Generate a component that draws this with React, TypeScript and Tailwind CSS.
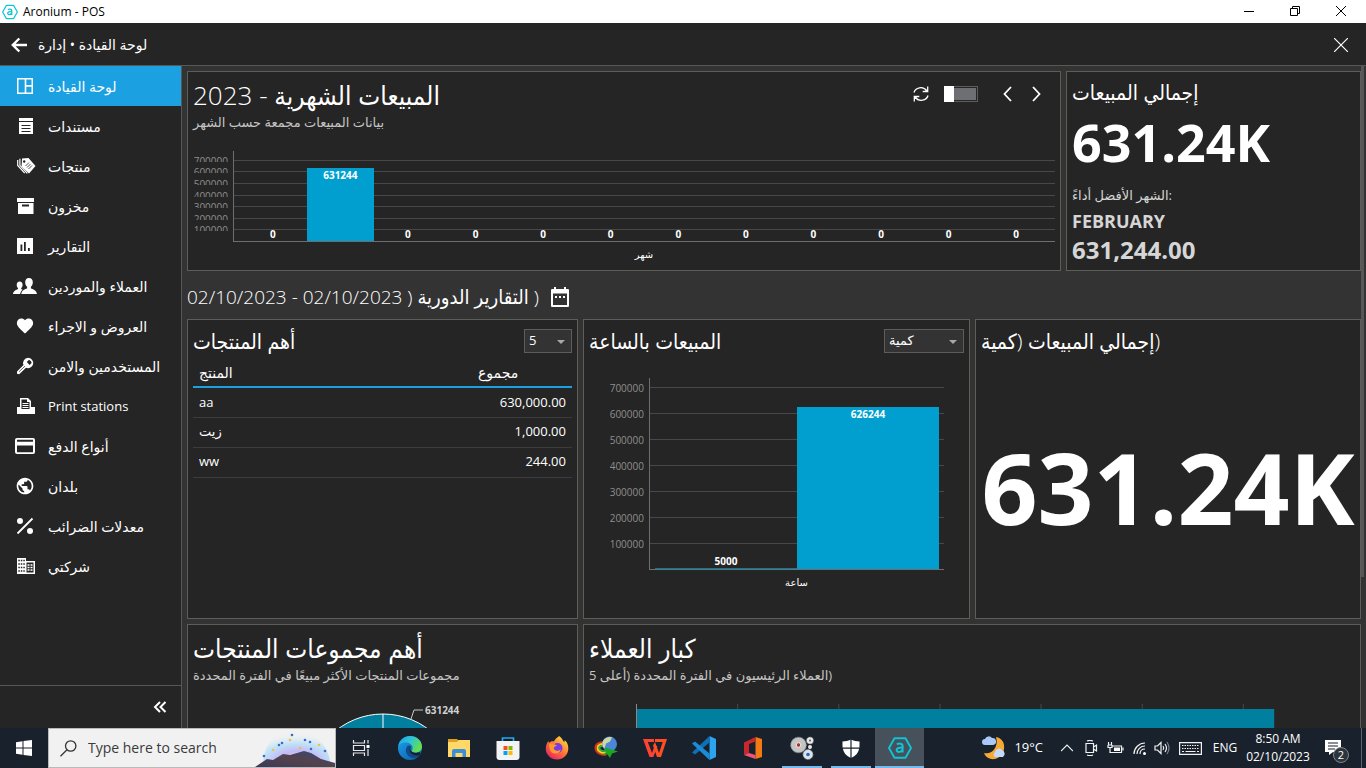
import React from "react";
import { IoMdHeart } from "react-icons/io";
import { MdPublic } from "react-icons/md";

type Kids = { children: React.ReactNode };

const Glyph = ({ children }: Kids) => (
  <svg width="24" height="24" viewBox="0 0 24 24" fill="currentColor" className="shrink-0" aria-hidden="true">
    {children}
  </svg>
);

const icons: Record<string, React.ReactNode> = {
  dashboard: (
    <Glyph>
      <path d="M4 4h16v16H4zM5.500 5.500v13h6.200v-13zm7.800 0v5.600h5.200V5.500zm0 7.200v5.800h5.200v-5.800z" fillRule="evenodd" />
    </Glyph>
  ),
  documents: (
    <Glyph>
      <path d="M6 4h14v3H6zM6 8h14v12H6z" />
      <path d="M8.500 11.500h9M8.500 14.500h9M8.500 17.500h9" stroke="#252525" strokeWidth="1" />
    </Glyph>
  ),
  products: (
    <Glyph>
      <path d="M9 4.500 15.500 4 22.500 12 16 19.500 8.500 12.500z" />
      <path d="M4.700 6v5.500l7 7.700M6.900 4.800v6.500l7.400 8" fill="none" stroke="currentColor" strokeWidth="1.200" />
      <circle cx="11.200" cy="7.500" r="1.200" fill="#252525" />
      <path d="m12.500 12 3.500-3.500M14 13.500 17.500 10M15.500 15l3.500-3.500" stroke="#252525" strokeWidth=".8" />
    </Glyph>
  ),
  stock: (
    <Glyph>
      <path d="M4 4h17v4H4zM5 9h15.500v11H5zM9 10.500v2h7v-2z" fillRule="evenodd" />
    </Glyph>
  ),
  reports: (
    <Glyph>
      <path d="M4 4h16v16H4zM7.500 10.500v6.500h1.800v-6.500zM11 8v9h1.800V8zM15 14v3h1.800v-3z" fillRule="evenodd" />
    </Glyph>
  ),
  people: (
    <Glyph>
      <path d="M16 4c2.600 0 3.800 1.800 3.800 4.300 0 2-.8 3.600-1.900 4.500v1.400c1.800 1.100 5.600 1.600 6.100 5.800H8.300c.4-4.200 4-4.700 5.800-5.800v-1.400c-1.100-.9-1.900-2.500-1.900-4.500C12.200 5.800 13.400 4 16 4z" />
      <path d="M6.700 7.500c2 0 2.900 1.400 2.900 3.300 0 1.500-.6 2.700-1.400 3.300v1c.5.300 1 .5 1.600.700-1.400 1-2.300 2.300-2.700 4.200H0c.3-3.200 3.600-4.100 5-4.900v-1c-.8-.6-1.300-1.800-1.300-3.300 0-1.900 1-3.300 3-3.300z" />
    </Glyph>
  ),
  heart: <IoMdHeart size={20} className="mx-[2px] shrink-0" aria-hidden="true" />,
  key: (
    <Glyph>
      <path d="M15 3.800a5.200 5.200 0 1 1-2 10L6.200 20.200 4 19.800v-2.300l6.500-6.400A5.300 5.300 0 0 1 15 3.800zm.8 2.300-2 1.800 2.800 3 2-1.900c-.2-1.500-1.300-2.700-2.800-2.900z" fillRule="evenodd" />
      <path d="m6 17.800 6-5.700" stroke="#252525" strokeWidth=".7" />
    </Glyph>
  ),
  print: (
    <Glyph>
      <path d="M4 13h3V4h8l3 3v6h4v7H4zM8.500 5.500V15h8V8H14V5.500z" fillRule="evenodd" />
      <path d="M9.500 9.500h6M9.500 11.500h6M9.500 13.500h6" stroke="currentColor" strokeWidth="1" />
    </Glyph>
  ),
  card: (
    <Glyph>
      <path d="M4 4h16a2 2 0 0 1 2 2v12a2 2 0 0 1-2 2H4a2 2 0 0 1-2-2V6a2 2 0 0 1 2-2zm0 1.800v2h16v-2zM4 11.500v6.700h16v-6.700z" fillRule="evenodd" />
    </Glyph>
  ),
  globe: <MdPublic size={20} className="mx-[2px] shrink-0" aria-hidden="true" />,
  percent: (
    <Glyph>
      <circle cx="7" cy="7" r="3" />
      <circle cx="17" cy="17" r="3" />
      <path d="M19.500 4.500 4.500 19.500" stroke="currentColor" strokeWidth="1.800" />
    </Glyph>
  ),
  company: (
    <Glyph>
      <path d="M4 4h9v3h9v13H4z" />
      <path d="M5.300 6.500h6.500M5.300 10h6.500M5.300 13.500h6.500M5.300 17h6.500" stroke="#252525" strokeWidth="1.500" strokeDasharray="1.500 1" />
      <path d="M13.500 8.500h7v10h-7z" fill="#252525" />
      <path d="M14.500 11h5M14.500 13.500h5M14.500 16h5" stroke="currentColor" strokeWidth="1.500" strokeDasharray="2 1" />
    </Glyph>
  ),
};

const nav = [
  { icon: "dashboard", label: "لوحة القيادة" },
  { icon: "documents", label: "مستندات" },
  { icon: "products", label: "منتجات" },
  { icon: "stock", label: "مخزون" },
  { icon: "reports", label: "التقارير" },
  { icon: "people", label: "العملاء والموردين" },
  { icon: "heart", label: "العروض و الاجراء" },
  { icon: "key", label: "المستخدمين والامن" },
  { icon: "print", label: "Print stations", latin: true },
  { icon: "card", label: "أنواع الدفع" },
  { icon: "globe", label: "بلدان" },
  { icon: "percent", label: "معدلات الضرائب" },
  { icon: "company", label: "شركتي" },
];

const AroniumLogo = ({ size }: { size: number }) => (
  <svg width={size} height={size} viewBox="0 0 24 24" fill="none" stroke="#0fc4d4" strokeLinejoin="round" aria-hidden="true">
    <path d="M6.500 2.200h11L23 12l-5.500 9.800h-11L1 12z" strokeWidth="1.900" />
    <path d="M8.800 8.300c1.600-1 5.800-1.300 5.800 1.600v6.600M14.600 11.600c-3.200-.2-6 .4-6 2.400 0 2.600 4.400 2.500 6-.2" strokeWidth="2" />
  </svg>
);

function TitleBar() {
  const btn = "flex h-full w-[46px] items-center justify-center";
  return (
    <div className="flex h-[23px] shrink-0 items-center bg-white text-black">
      <div className="flex items-center gap-[5px] pl-[2px] text-xs">
        <AroniumLogo size={16} />
        <span>Aronium - POS</span>
      </div>
      <div className="ml-auto flex h-full pr-[2px] pb-[2px]">
        <button className={btn} aria-label="Minimize">
          <svg width="10" height="10"><path d="M0 5.500h10" stroke="#000" /></svg>
        </button>
        <button className={btn} aria-label="Restore">
          <svg width="10" height="10" fill="none" stroke="#000"><path d="M.5 2.500h7v7h-7zM2.500 2.500v-2h7v7h-2" /></svg>
        </button>
        <button className={btn} aria-label="Close window">
          <svg width="10" height="10"><path d="M0 0l10 10M10 0 0 10" stroke="#000" /></svg>
        </button>
      </div>
    </div>
  );
}

function Header() {
  return (
    <header className="flex h-[43px] shrink-0 items-center border-b border-[#575757] bg-[#252525] pt-[2px] pr-[18px] pl-[11px]">
      <button aria-label="Back">
        <svg width="16" height="16" viewBox="0 0 16 16" fill="none" stroke="#fff" strokeWidth="2.400">
          <path d="M16 8H2M8.300 1.500 1.800 8l6.500 6.500" />
        </svg>
      </button>
      <h1 className="ml-[11px] text-sm">لوحة القيادة • إدارة</h1>
      <button className="ml-auto" aria-label="Close">
        <svg width="14" height="14"><path d="M0 0l14 14M14 0 0 14" stroke="#fff" strokeWidth="1.200" /></svg>
      </button>
    </header>
  );
}

function Sidebar() {
  return (
    <aside className="flex w-[182px] shrink-0 flex-col border-r border-[#575757] bg-[#252525]">
      <nav>
        {nav.map((item, i) => (
          <a
            key={item.label}
            href="#"
            className={"flex h-10 items-center gap-[11px] pl-[13px] whitespace-nowrap " + (i === 0 ? "bg-[#1ba1e2]" : "")}
          >
            {icons[item.icon]}
            <span className={"pt-px " + (item.latin ? "text-[13px]" : "text-sm")}>{item.label}</span>
          </a>
        ))}
      </nav>
      <div className="mt-auto flex h-[43px] items-center justify-end border-t border-[#575757] pr-[14px]">
        <button aria-label="Collapse">
          <svg width="14" height="12" fill="none" stroke="#fff" strokeWidth="2"><path d="M7 1 2 6l5 5M12.500 1l-5 5 5 5" /></svg>
        </button>
      </div>
    </aside>
  );
}

const Card = ({ children, className = "" }: Kids & { className?: string }) => (
  <section className={"min-w-0 overflow-hidden border border-[#5c5e57] bg-[#252525] px-[5px] " + className}>{children}</section>
);

const Title = ({ children }: Kids) => (
  <h2 className="font-['Open_Sans','DejaVu_Sans_Condensed','DejaVu_Sans',sans-serif] text-[21px] leading-[28px] font-light whitespace-nowrap">{children}</h2>
);
const BigTitle = ({ children }: Kids) => (
  <h2 className="font-['Open_Sans','DejaVu_Sans_Condensed','DejaVu_Sans',sans-serif] text-[26px] leading-[32px] font-light whitespace-nowrap">{children}</h2>
);
const Sub = ({ children }: Kids) => <p className="mt-px text-[13px] leading-[20px] whitespace-nowrap text-[#c4c4c4]">{children}</p>;

const ticks = [700000, 600000, 500000, 400000, 300000, 200000, 100000];

type ChartProps = {
  data: number[];
  step: number;
  top: number;
  caption: string;
  clipped?: boolean;
};

function BarChart({ data, step, top, caption, clipped }: ChartProps) {
  const height = Math.round(top + step * 7);
  const y = (v: number) => Math.round(height - (v / 100000) * step);
  return (
    <figure className="flex">
      <div className="relative w-10 shrink-0 text-[10px] text-[#8f8f8f]" style={{ height }}>
        {ticks.map((t) => (
          <div
            key={t}
            className={"absolute right-[5px] overflow-hidden leading-[12px] " + (clipped ? "h-[7px]" : "h-[12px]")}
            style={{ top: y(t) - 5 }}
          >
            {t}
          </div>
        ))}
      </div>
      <div className="min-w-0 flex-1">
        <div className="relative border-b border-l border-[#6e6e6e]" style={{ height: height + 1 }}>
          <svg className="absolute inset-0 h-full w-full" aria-hidden="true">
            {ticks.map((t) => (
              <line key={t} x1="0" x2="100%" y1={y(t) + 0.5} y2={y(t) + 0.5} stroke="#484848" />
            ))}
          </svg>
          <div className="relative flex h-full items-end px-[5px]">
            {data.map((v, i) => (
              <div key={i} className="flex flex-1 flex-col items-center justify-end text-[10px] leading-[14px] font-bold">
                {v < 20000 && <span>{v}</span>}
                <div
                  className={"w-full text-center " + (v < 20000 ? "bg-[#007f9f]" : "bg-[#009fcf]")}
                  style={{ height: Math.floor((v / 100000) * step) }}
                >
                  {v >= 20000 && v}
                </div>
              </div>
            ))}
          </div>
        </div>
        <figcaption className="pt-[5px] text-center text-[10px] leading-[14px]">{caption}</figcaption>
      </div>
    </figure>
  );
}

function Select({ label, value, size }: { label: string; value: string; size: string }) {
  return (
    <div className={"relative " + size}>
      <select
        aria-label={label}
        defaultValue={value}
        className="h-[24px] w-full appearance-none border border-[#5c5e57] bg-[#333333] pr-5 pl-1 text-left [direction:ltr]"
      >
        <option>{value}</option>
      </select>
      <svg className="pointer-events-none absolute top-[11px] right-[7px]" width="8" height="4"><path d="M0 0h8L4 4z" fill="#a8a8a8" /></svg>
    </div>
  );
}

function MonthlySales() {
  return (
    <Card className="h-[200px] pt-[7px]">
      <div className="flex items-start justify-between">
        <div>
          <BigTitle>المبيعات الشهرية - 2023</BigTitle>
          <Sub>بيانات المبيعات مجمعة حسب الشهر</Sub>
        </div>
        <div className="flex items-center gap-[15px] pt-[7px] pr-[14px]">
          <button aria-label="Refresh">
            <svg width="16" height="16" viewBox="0 0 16 16" fill="none" stroke="#fff" strokeWidth="1.300">
              <path d="M1 6.500C2.300 1.500 10 -.5 14 5M15 9.500c-1.300 5-9 7-13 1.500M14.700.500v5h-5M1.300 15.500v-5h5" />
            </svg>
          </button>
          <input
            type="checkbox"
            role="switch"
            aria-label="Compare"
            className="h-4 w-[34px] appearance-none border border-[#5c5e57] bg-[#6d6f72] shadow-[inset_0_0_0_1px_#252525] before:-mt-px before:-ml-px before:block before:h-4 before:w-[10px] before:bg-white"
          />
          <button aria-label="Previous year" className="ml-[10px]">
            <svg width="9" height="16" fill="none" stroke="#fff" strokeWidth="1.800"><path d="M8 1 1.500 8 8 15" /></svg>
          </button>
          <button aria-label="Next year" className="ml-[5px]">
            <svg width="9" height="16" fill="none" stroke="#fff" strokeWidth="1.800"><path d="M1 1l6.500 7L1 15" /></svg>
          </button>
        </div>
      </div>
      <div className="pt-[19px]">
        <BarChart data={[0, 631244, 0, 0, 0, 0, 0, 0, 0, 0, 0, 0]} step={11.6} top={9} caption="شهر" clipped />
      </div>
    </Card>
  );
}

function TotalSales() {
  return (
    <Card className="flex h-[200px] flex-col pt-[6px]">
      <Title>إجمالي المبيعات</Title>
      <p className="text-[52px] leading-[72px] font-bold">631.24K</p>
      <p className="pt-[6px] text-[13px] leading-[22px] text-[#d6d6d6]">الشهر الأفضل أداءً:</p>
      <p className="pt-px text-lg leading-[28px] font-bold text-[#d6d6d6]">FEBRUARY</p>
      <p className="text-2xl leading-[30px] font-bold text-[#d6d6d6]">631,244.00</p>
    </Card>
  );
}

const products = [
  ["aa", "630,000.00"],
  ["زيت", "1,000.00"],
  ["ww", "244.00"],
];

function TopProducts() {
  return (
    <Card className="h-[300px] pt-[7px]">
      <div className="flex items-start justify-between">
        <Title>أهم المنتجات</Title>
        <div className="pt-[2px]"><Select label="عدد المنتجات" value="5" size="w-[48px] text-[13px]" /></div>
      </div>
      <table className="mt-[5px] w-full table-fixed text-[13px]">
        <thead>
          <tr className="h-[27px] border-b-2 border-[#1ba1e2] text-left text-sm leading-[20px]">
            <th className="px-[6px] font-normal">المنتج</th>
            <th className="w-[100px] px-[6px] font-normal">مجموع</th>
          </tr>
        </thead>
        <tbody>
          {products.map(([name, total]) => (
            <tr key={name} className="h-[30px] border-b border-[#3c3c3c]">
              <td className="px-[6px]">{name}</td>
              <td className="px-[6px] text-right">{total}</td>
            </tr>
          ))}
        </tbody>
      </table>
    </Card>
  );
}

function HourlySales() {
  return (
    <Card className="h-[300px] pt-[7px]">
      <div className="flex items-start justify-between">
        <Title>المبيعات بالساعة</Title>
        <div className="pt-[2px]"><Select label="عرض حسب" value="كمية" size="w-[80px] text-[13px]" /></div>
      </div>
      <div className="pt-[23px] pr-[20px] pl-[20px]">
        <BarChart data={[5000, 626244]} step={26} top={9} caption="ساعة" />
      </div>
    </Card>
  );
}

function TotalQuantity() {
  return (
    <Card className="flex h-[300px] flex-col pt-[7px]">
      <Title><bdi>إجمالي المبيعات (كمية</bdi>)</Title>
      <p className="flex flex-1 items-center justify-center text-[98px] leading-none font-bold">631.24K</p>
    </Card>
  );
}

function TopGroups() {
  return (
    <Card className="h-[300px] pt-[7px]">
      <BigTitle>أهم مجموعات المنتجات</BigTitle>
      <Sub>مجموعات المنتجات الأكثر مبيعًا في الفترة المحددة</Sub>
      <div className="flex justify-center pt-[18px]">
        <svg width="200" height="170" viewBox="0 0 200 170" className="overflow-visible">
          <circle cx="100" cy="86" r="75" fill="#007f9f" stroke="#fff" />
          <path d="M100 86V11" stroke="#fff" />
          <path d="m128 16 3-9h9" fill="none" stroke="#c8c8c8" />
          <text x="142" y="11" fill="#d0d0d0" className="text-[10px] font-bold">631244</text>
        </svg>
      </div>
    </Card>
  );
}

function TopCustomers() {
  return (
    <Card className="col-span-2 h-[300px] pt-[7px]">
      <BigTitle>كبار العملاء</BigTitle>
      <Sub><bdi>العملاء الرئيسيون في الفترة المحددة (أعلى 5</bdi>)</Sub>
      <div className="pt-[19px] pr-[11px] pl-[47px]">
        <svg className="h-[180px] w-full" aria-hidden="true">
          {[1, 2, 3, 4, 5, 6, 7].map((n) => (
            <rect key={n} x={(n * 100) / 7 + "%"} y="0" width="1" height="100%" fill="#484848" />
          ))}
          <rect x="1" y="5" width="90%" height="100%" fill="#007f9f" />
          <rect width="1" height="100%" fill="#8a8a8a" />
        </svg>
      </div>
    </Card>
  );
}

function Dashboard() {
  return (
    <main className="flex min-w-0 flex-1 overflow-hidden bg-[#333333]">
      <div className="min-w-0 flex-1 pt-[5px] pl-[5px]">
        <div className="grid grid-cols-[874fr_295fr] gap-[5px]">
          <MonthlySales />
          <TotalSales />
        </div>
        <div className="flex h-[48px] items-center gap-[11px] pt-[4px]">
          <h2 className="font-['Open_Sans','DejaVu_Sans_Condensed','DejaVu_Sans',sans-serif] text-[19px] font-light whitespace-nowrap">
            02/10/2023 - 02/10/2023 ) <bdi className="text-xl">التقارير الدورية</bdi> )
          </h2>
          <button aria-label="Choose period">
            <svg width="20" height="20" viewBox="0 0 20 20" fill="#fff">
              <path d="M2 2h2V0h2v2h8V0h2v2h2a1 1 0 0 1 1 1v16a1 1 0 0 1-1 1H2a1 1 0 0 1-1-1V3a1 1 0 0 1 1-1zm1 4.500V18h14V6.500zM5 9h2v2H5zm4 0h2v2H9zm4 0h2v2h-2z" fillRule="evenodd" />
            </svg>
          </button>
        </div>
        <div className="grid grid-cols-[391fr_387fr_386fr] gap-[5px]">
          <TopProducts />
          <HourlySales />
          <TotalQuantity />
          <TopGroups />
          <TopCustomers />
        </div>
      </div>
      <div className="w-[5px] shrink-0">
        <div className="h-[511px] w-[3px] bg-[#575757]" />
      </div>
    </main>
  );
}

const apps: { name: string; art: React.ReactNode; state?: "open" | "active" }[] = [
  {
    name: "Task View",
    art: (
      <g fill="none" stroke="#e8e8e8" strokeWidth="1.200">
        <path d="M4.500 4v3h11V4M4.500 20v-3h11v3M4.500 9.500h11v5h-11zM19 4v3.500M19 13v7" />
        <path d="M17.500 9h3v3h-3z" fill="#fff" stroke="none" />
      </g>
    ),
  },
  {
    name: "Edge",
    art: (
      <>
        <defs>
          <linearGradient id="edgeTop" x1="0" x2="1" y1="0" y2=".5"><stop offset="0" stopColor="#1d9fe8" /><stop offset=".5" stopColor="#2dc3d8" /><stop offset="1" stopColor="#63e04f" /></linearGradient>
          <linearGradient id="edgeLow" x1="0" x2="1" y1="0" y2="1"><stop offset="0" stopColor="#1ba3ec" /><stop offset="1" stopColor="#0c59a4" /></linearGradient>
        </defs>
        <circle cx="12" cy="12" r="12" fill="url(#edgeLow)" />
        <path d="M.2 10.500C1.500 4 6.500 0 12 0c7 0 12 5 12 10.500 0 4-3 6-6.500 6-2.500 0-4-.8-3.800-1.600.200-.8 1-1.200 1-2.900C14.700 8.500 11 6.500 7.500 6.500 4 6.500 1.500 8 .2 10.500z" fill="url(#edgeTop)" />
        <path d="M9.500 10c-3 3-2 10 4.500 11.800 4 .8 7-1 8.800-4-5 2.500-9.500.5-10.500-3.500-.3-1.500 0-3 .8-4-1.200-.8-2.600-.9-3.600-.3z" fill="#114a8b" />
        <path d="M13 10c-1.500 2-.8 5 2 6.300 3 1.300 5.300.4 6.500-.3 1.200 1 1.300 1.500.8 2.400-3 2.200-8.500 1.400-10.200-2.600-1.100-2.700-.4-5 .9-5.800z" fill="#19222c" />
      </>
    ),
  },
  {
    name: "File Explorer",
    art: (
      <>
        <path d="M1 3h9l2 2h11v16H1z" fill="#e0a020" />
        <path d="M1 6h9l1.500-2H23v17H1z" fill="#ffd867" />
        <path d="M5 21v-6q0-2 2-2h10q2 0 2 2v6h-3.500v-4h-7v4z" fill="#3a8fd8" />
      </>
    ),
  },
  {
    name: "Store",
    art: (
      <>
        <path d="M6.500 6V2h11v4" fill="none" stroke="#23a8f2" strokeWidth="1.700" />
        <path d="M.5 5h23v16q0 3-3 3h-17q-3 0-3-3z" fill="#f3f3f3" />
        <path d="M7.500 10h4v4h-4z" fill="#f25022" /><path d="M12.500 10h4v4h-4z" fill="#7fba00" />
        <path d="M7.500 15h4v4h-4z" fill="#00a4ef" /><path d="M12.500 15h4v4h-4z" fill="#ffb900" />
      </>
    ),
  },
  {
    name: "Firefox",
    art: (
      <>
        <defs><linearGradient id="fox" x1=".9" x2=".2" y1=".1" y2="1"><stop offset="0" stopColor="#ffdf3a" /><stop offset=".5" stopColor="#ff7139" /><stop offset="1" stopColor="#e51f68" /></linearGradient></defs>
        <path d="M14 0c2 1 3 3 4 4.500l1.200 1.800.6-2C22 6 23.500 9 23.300 13c-.4 6-5 10.500-11.300 10.500S.8 18.500.8 13c0-3.500 1-6 2.700-8l.5 2C5 5.500 7.500 5 9 5.500 10.500 2 13 1.500 14 0z" fill="url(#fox)" />
        <circle cx="12.500" cy="12" r="5" fill="#7a3be2" />
        <path d="M4 8c3-1.500 5 .7 8 1-1 1.700-3 1.500-3.300 3 0 2.500 4 4 6.800 1.500C15.500 18 7 19.500 5 14c-.7-2-.9-4-1-6z" fill="#ff9a2a" />
      </>
    ),
  },
  {
    name: "Download Manager",
    art: (
      <>
        <path d="M12 6C5 5.500 1.500 8 1.500 12s4.500 7.500 11 6.500" fill="none" stroke="#e2301e" strokeWidth="2" />
        <path d="M12 7.800C6.500 7.500 3.500 9 3.500 12s4 5.500 9 4.700" fill="none" stroke="#f6d21c" strokeWidth="2" />
        <path d="M12 9.500C8 9.500 5.400 10 5.400 12s3 3.800 7 3" fill="none" stroke="#35b53a" strokeWidth="1.800" />
        <circle cx="15.500" cy="8" r="7.500" fill="#4b86d8" />
        <path d="M9 5c2.500-4 7-4.500 9-3.500l-2 4-4 2-1.500 5C8 10.500 7.800 7.500 9 5z" fill="#cfd8a0" />
        <path d="m11 11.500 13 4-6 2-2 4.500-3-4-5 2 4-4z" fill="#19a81f" />
      </>
    ),
  },
  {
    name: "WPS Office",
    art: (
      <>
        <path d="M0 3h11v3H4.800L9 17l2.500-7h3L10.300 21H6.500z" fill="#ff4332" />
        <path d="M12 3h12l-6 18h-4L10 9.500 12 6l4 11L19.700 6H12z" fill="#ff4d24" />
      </>
    ),
  },
  {
    name: "VS Code",
    art: (
      <>
        <path d="M17.500 0 24 3v18l-6.500 3z" fill="#2ba5f0" />
        <path d="M17.500 0v6.500L3 18.500 0 16.500z" fill="#0f6fb8" />
        <path d="M17.500 24v-6.500L3 5.500 0 7.500z" fill="#1c8bd6" />
      </>
    ),
  },
  {
    name: "Office",
    art: (
      <>
        <path d="M14.500 1 21 3v18l-6.500 2z" fill="#f27a12" />
        <path d="M3 6.500 14.500 1v4.500L8 8v9l-5 2z" fill="#c8282c" />
        <path d="M3 19 8 17l6.500 2v4z" fill="#f2537a" />
      </>
    ),
  },
  {
    name: "Services",
    state: "open",
    art: (
      <>
        <circle cx="8.500" cy="9" r="7.800" fill="#c4c4c4" stroke="#8a8a8a" strokeDasharray="1.500 1" />
        <circle cx="8.500" cy="9" r="2.300" fill="#a33" stroke="#eee" />
        <circle cx="20" cy="4.500" r="3.500" fill="#e8e8e8" stroke="#777" strokeDasharray="1 1" /><circle cx="20" cy="4.500" r="1" fill="#555" />
        <circle cx="20" cy="11" r="2" fill="#e8e8e8" />
        <circle cx="18" cy="18.500" r="5" fill="#dbe3ee" stroke="#888" strokeDasharray="1.500 1" /><circle cx="18" cy="18.500" r="1.800" fill="#2f65b5" />
      </>
    ),
  },
  {
    name: "Security",
    state: "open",
    art: <path d="M11.400 3.800v7.700H3.600c-.1-1.800-.2-3.700-.1-6 3 0 5.500-.4 7.900-1.700zm1.200 0c2.400 1.300 4.900 1.700 7.900 1.700.1 2.300 0 4.200-.1 6h-7.800zM3.900 12.700h7.500v9C7 19.700 4.600 16.700 3.900 12.700zm8.700 0h7.500c-.7 4-3.100 7-7.500 9z" fill="#fff" />,
  },
  { name: "Aronium", state: "active", art: null },
];

function Taskbar() {
  const line = { fill: "none", stroke: "#f2f2f2", strokeWidth: 1.2 };
  return (
    <footer className="flex h-10 shrink-0 bg-[#18212c] whitespace-nowrap">
      <button className="flex w-12 shrink-0 items-center justify-center" aria-label="Start">
        <svg width="16" height="16" fill="#fff"><path d="M0 2.200 6.500 1.300v6.200H0zM7.500 1.100 16 0v7.500H7.500zM0 8.500h6.500v6.200L0 13.800zM7.500 8.500H16V16l-8.500-1.100z" /></svg>
      </button>
      <label className="relative flex w-[288px] shrink-0 items-center overflow-hidden border border-[#b9b9b9] bg-[#f1f1f1] pl-[11px] text-[#3a3a3a]">
        <svg width="17" height="17" fill="none" stroke="#333" strokeWidth="1.300" aria-hidden="true"><circle cx="10.700" cy="6" r="5.200" /><path d="M7 9.800.5 16.300" /></svg>
        <input type="text" aria-label="Search" placeholder="Type here to search" className="ml-[11px] w-[160px] bg-transparent text-sm placeholder:text-[#3a3a3a]" />
        <svg className="absolute right-0 bottom-0" width="80" height="36" viewBox="0 0 80 36" aria-hidden="true">
          <defs>
            <radialGradient id="glow" cx=".5" cy=".85" r=".8"><stop offset="0" stopColor="#fff0c8" /><stop offset=".35" stopColor="#c3b8f6" /><stop offset=".65" stopColor="#c0e4f8" /><stop offset="1" stopColor="#f1f1f1" stopOpacity="0" /></radialGradient>
            <linearGradient id="hill" x1="0" x2="1" y1="1" y2="0"><stop offset="0" stopColor="#3a3a5a" /><stop offset=".5" stopColor="#54424c" /><stop offset="1" stopColor="#34497c" /></linearGradient>
          </defs>
          <path d="M8 36C8 10 22 0 40 0s34 12 36 36z" fill="url(#glow)" />
          <path d="m0 36 12-8 6 1 10-6 7 1 14-4 7 2 10 6 14 4v4z" fill="url(#hill)" />
          {[[9, 25], [18, 19], [24, 14], [27, 12], [35, 9], [37, 4], [50, 9], [45, 17], [56, 18], [55, 11], [64, 14], [70, 20]].map(([x, y], i) => (
            <circle key={x} cx={x} cy={y} r="1.300" fill={i % 3 === 1 ? "#f0c040" : "#3c6cc0"} />
          ))}
        </svg>
      </label>
      {apps.map((app) => (
        <button
          key={app.name}
          aria-label={app.name}
          className={"flex w-[49px] shrink-0 flex-col items-center " + (app.state === "active" ? "bg-[#46515c]" : "")}
        >
          <span className="flex flex-1 items-center">
            {app.art ? <svg width="24" height="24" viewBox="0 0 24 24" aria-hidden="true">{app.art}</svg> : <AroniumLogo size={24} />}
          </span>
          {app.state && <span className={"-mt-[2px] h-[2px] bg-[#76b9ed] " + (app.state === "active" ? "w-full" : "w-10")} />}
        </button>
      ))}
      <div className="ml-auto flex text-xs">
        <button className="flex items-center gap-[8px] pr-[12px] text-[13px]">
          <svg width="25" height="24" aria-hidden="true">
            <path d="M15 1c6 1 9 6 8 12-1 7-7 11-13 10-4-1-6-3-7-6 8 2 15-6 12-16z" fill="#f6a935" />
            <path d="M4 9a3 3 0 0 1 0-6 4 4 0 0 1 7-1 3.500 3.500 0 0 1 1 7z" fill="#a9c9f8" />
            <path d="M14 21a3 3 0 0 1 0-5 4 4 0 0 1 7-2 4 4 0 0 1 1 7z" fill="#c3dafb" />
          </svg>
          19°C
        </button>
        <button className="flex w-6 items-center justify-center" aria-label="Hidden icons">
          <svg width="12" height="8" {...line}><path d="m0 7 6-6 6 6" /></svg>
        </button>
        <button className="flex w-6 items-center justify-center" aria-label="Meet Now">
          <svg width="13" height="16" {...line}><path d="M1 3.500h7.500v9H1zM8.500 7l3-2v6l-3-2M2 1q3-1.200 6 0M2 15q3 1.200 6 0" /></svg>
        </button>
        <button className="flex w-6 items-center justify-center" aria-label="Battery">
          <svg width="17" height="12" {...line}><path d="M5 4h9.500v6.500H5M16 5.500v3M1 3h4M1.500 0v3M4.500 0v3M1 3v2.500h4V3M3 6v4.500h2" /><path d="M7 5.500h6V9H7z" fill="#fff" stroke="none" /></svg>
        </button>
        <button className="flex w-6 items-center justify-center" aria-label="Wi-Fi">
          <svg width="13" height="13" {...line}><path d="M1 12C1 6 6 1 12 1M4 12c0-4.500 3.500-8 8-8M7 12c0-3 2-5 5-5" /><circle cx="11.500" cy="11.500" r="1.500" fill="#fff" stroke="none" /></svg>
        </button>
        <button className="flex w-[22px] items-center justify-center" aria-label="Volume">
          <svg width="16" height="14" {...line}><path d="M1 5h2.500L7 1.500v11L3.500 9H1zM9 5q1.500 2 0 4M11 3q3 4 0 8" /><path d="M13 1q4 6 0 12" stroke="#78828c" /></svg>
        </button>
        <button className="flex w-[34px] items-center justify-center" aria-label="Keyboard">
          <svg width="23" height="13" {...line}><path d="M.6.600h21.800v11.800H.6z" /><path d="M3 3.500h17M3 6.500h17" strokeDasharray="1.500 1" /><path d="M3 9.500h2M6.500 9.500h10M18 9.500h2" /></svg>
        </button>
        <button className="w-[36px]">ENG</button>
        <button className="w-[70px] text-center leading-[18px]">8:50 AM<br />02/10/2023</button>
        <button className="relative flex w-[48px] items-center justify-center" aria-label="Notifications">
          <svg width="16" height="15" className="-mt-[1px] mr-[8px]"><path d="M0 0h16v12H8l-4 3v-3H0z" fill="#fff" /><path d="M3 3h10M3 6h10M3 9h7" stroke="#18212c" /></svg>
          <span className="absolute top-[19px] left-[20px] flex h-4 w-4 items-center justify-center rounded-full border border-[#80868c] bg-[#2e343b] text-[11px]">2</span>
        </button>
        <div className="w-[5px] border-l border-[#5b636b]" />
      </div>
    </footer>
  );
}

export default function App() {
  return (
    <div className="flex h-screen flex-col overflow-hidden bg-[#252525] font-['Open_Sans','DejaVu_Sans',sans-serif] text-white">
      <TitleBar />
      <Header />
      <div className="flex min-h-0 flex-1">
        <Sidebar />
        <Dashboard />
      </div>
      <Taskbar />
    </div>
  );
}
